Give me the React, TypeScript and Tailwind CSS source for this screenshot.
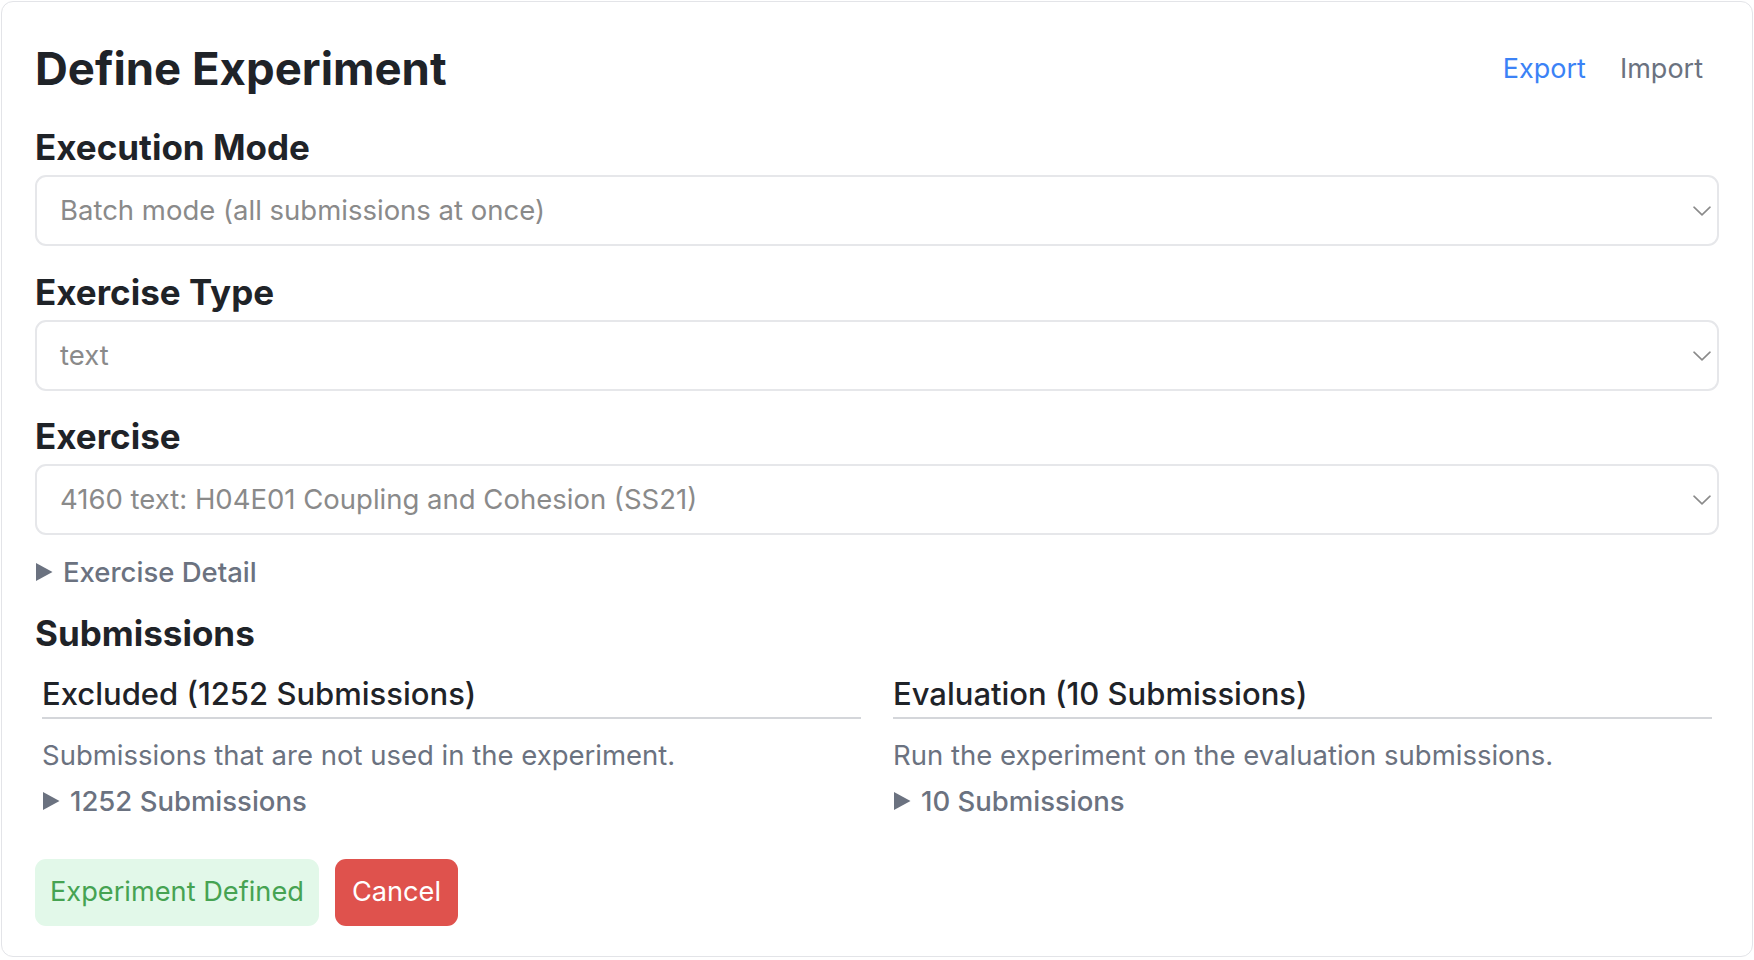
import React from 'react';

function Chevron() {
  return (
    <svg width="18" height="10" viewBox="0 0 18 10" fill="none" className="shrink-0">
      <path d="M1 1.2l8 7.6 8-7.6" stroke="#8a8a8a" strokeWidth="1.6" strokeLinecap="round" strokeLinejoin="round" />
    </svg>
  );
}

function Triangle() {
  return (
    <svg width="18" height="20" viewBox="0 0 18 20" className="shrink-0">
      <path d="M1 1 L17.5 10 L1 19 Z" fill="#6b7280" />
    </svg>
  );
}

function SelectBox({ value }: { value: string }) {
  return (
    <div className="mt-[10px] flex h-[71px] items-center justify-between rounded-[11px] border-2 border-[#e6e7ea] bg-white pl-[23px] pr-[6px]">
      <span className="text-[27.5px] text-[#8a8a8a]">{value}</span>
      <Chevron />
    </div>
  );
}

function Disclosure({ label }: { label: string }) {
  return (
    <div className="flex items-center gap-[10px] text-[27.5px] font-medium leading-[36px] text-[#6b7280]">
      <Triangle />
      <span>{label}</span>
    </div>
  );
}

function SubmissionColumn({ title, desc, count }: { title: string; desc: string; count: string }) {
  return (
    <div className="px-[7px]">
      <h3 className="border-b-2 border-[#d4d6da] pb-[5px] text-[31px] font-medium leading-[36px] text-[#1f2328]">{title}</h3>
      <p className="mt-[18px] text-[27.5px] leading-[36px] text-[#6b7280]">{desc}</p>
      <div className="mt-[10px]">
        <Disclosure label={count} />
      </div>
    </div>
  );
}

export default function App() {
  return (
    <div className="min-h-screen bg-white p-px" style={{ fontFamily: 'Inter, "Noto Sans", sans-serif' }}>
      <div className="rounded-[12px] border border-[#e3e4e8] px-[33px] pt-[40px] pb-[30px]">
        <div className="flex items-center justify-between">
          <h1 className="text-[45.5px] font-bold leading-[54px] text-[#1f2328]">Define Experiment</h1>
          <div className="flex items-center gap-[2px] text-[27px]">
            <button className="px-[16px] text-[#3b82f6]">Export</button>
            <button className="px-[16px] text-[#6b7280]">Import</button>
          </div>
        </div>

        <div className="mt-[33px]">
          <label className="block text-[35px] font-bold leading-[36px] text-[#1f2328]">Execution Mode</label>
          <SelectBox value="Batch mode (all submissions at once)" />
        </div>

        <div className="mt-[28px]">
          <label className="block text-[35px] font-bold leading-[36px] text-[#1f2328]">Exercise Type</label>
          <SelectBox value="text" />
        </div>

        <div className="mt-[27px]">
          <label className="block text-[35px] font-bold leading-[36px] text-[#1f2328]">Exercise</label>
          <SelectBox value="4160 text: H04E01 Coupling and Cohesion (SS21)" />
        </div>

        <div className="mt-[19px]">
          <Disclosure label="Exercise Detail" />
        </div>

        <h2 className="mt-[25px] text-[35px] font-bold leading-[36px] text-[#1f2328]">Submissions</h2>

        <div className="mt-[25px] grid grid-cols-2 gap-[18px]">
          <SubmissionColumn
            title="Excluded (1252 Submissions)"
            desc="Submissions that are not used in the experiment."
            count="1252 Submissions"
          />
          <SubmissionColumn
            title="Evaluation (10 Submissions)"
            desc="Run the experiment on the evaluation submissions."
            count="10 Submissions"
          />
        </div>

        <div className="mt-[40px] flex gap-[16px]">
          <button className="h-[67px] rounded-[11px] bg-[#e2f8e9] px-[15px] text-[27.2px] text-[#46a352]">Experiment Defined</button>
          <button className="h-[67px] rounded-[11px] bg-[#df524d] px-[17px] text-[27.2px] text-white">Cancel</button>
        </div>
      </div>
    </div>
  );
}
